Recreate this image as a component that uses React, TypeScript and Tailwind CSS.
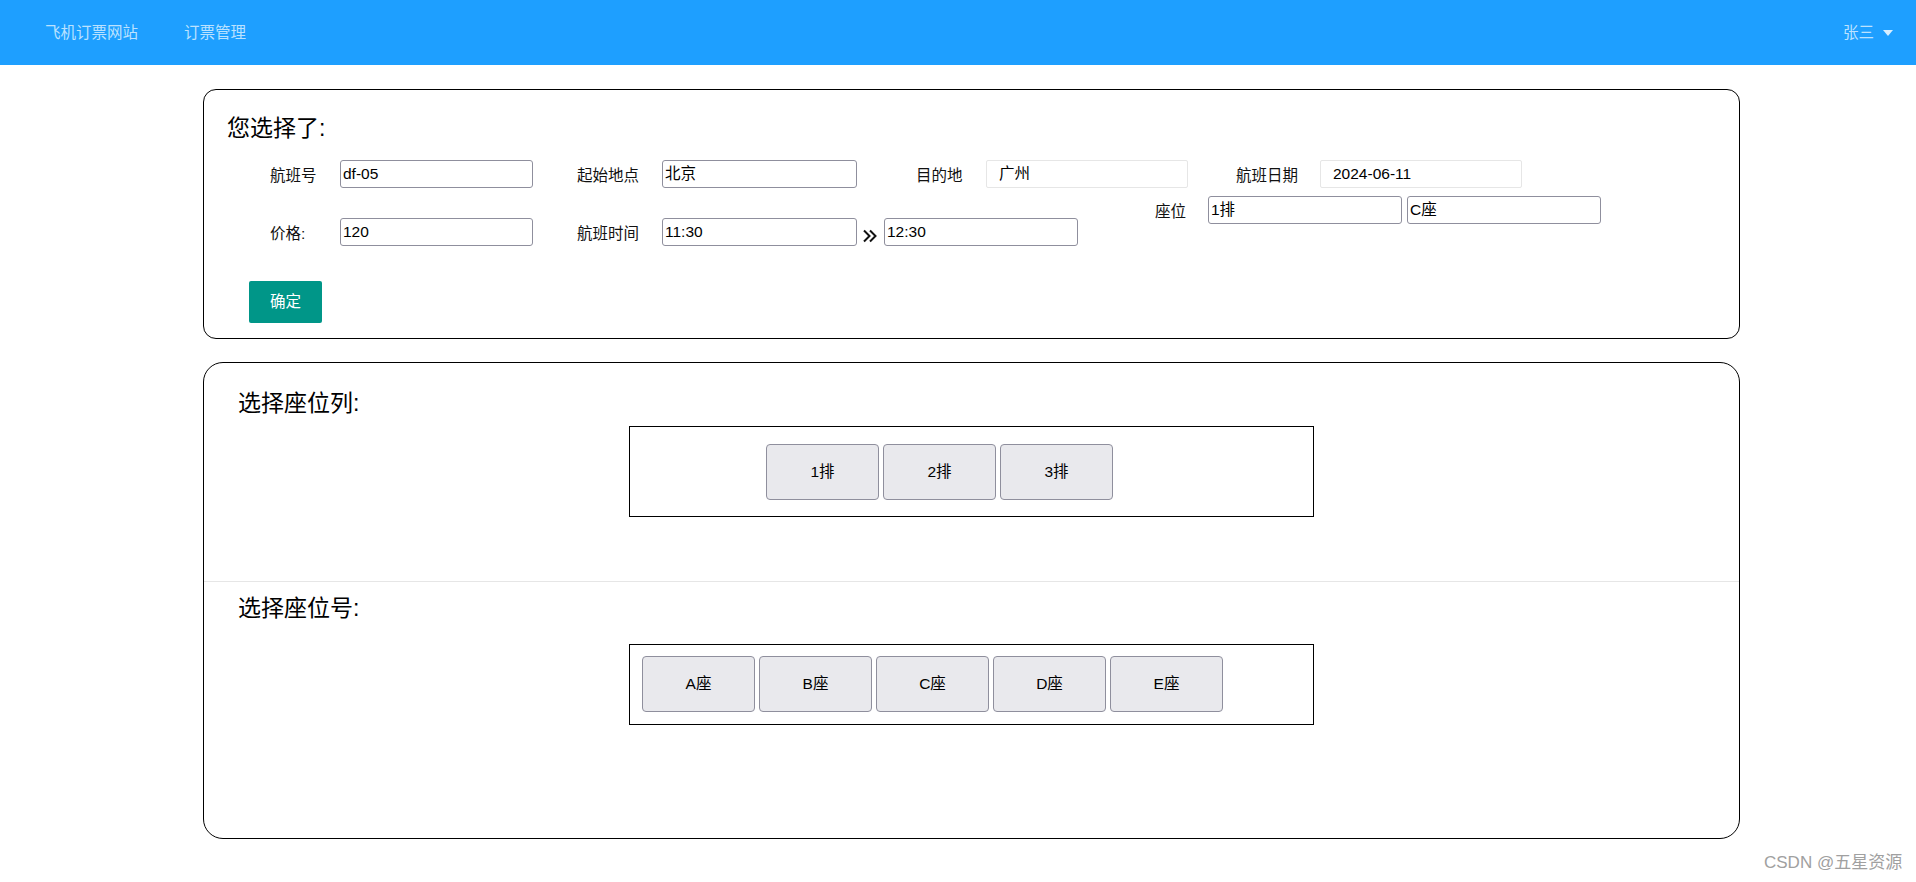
import React from "react";

const FONT = { fontFamily: '"Liberation Sans", "Noto Sans CJK SC", Arial, sans-serif' };

function Label({ w, children }: { w: string; children: React.ReactNode }) {
  return <div className={`${w} h-[28px] shrink-0 text-[15.5px] leading-[32px] text-[#111]`}>{children}</div>;
}

function NativeInput({ w, value }: { w: string; value: string }) {
  return (
    <div
      className={`${w} h-[28px] shrink-0 box-border border border-[#8f8f9d] rounded-[3px] bg-white pl-[2px] flex items-center text-[15.5px] text-black`}
    >
      {value}
    </div>
  );
}

function LayInput({ w, value }: { w: string; value: string }) {
  return (
    <div
      className={`${w} h-[28px] shrink-0 box-border border border-[#e6e6e6] rounded-[2px] bg-white pl-[12px] flex items-center text-[15.5px] text-black`}
    >
      {value}
    </div>
  );
}

function SeatButton({ children }: { children: React.ReactNode }) {
  return (
    <div className="w-[113px] h-[56px] shrink-0 box-border border border-[#8f8f9d] rounded-[4px] bg-[#e9e9ed] flex items-center justify-center text-[15.5px] text-black">
      {children}
    </div>
  );
}

export default function App() {
  return (
    <div className="relative w-[1916px] h-[882px] bg-white overflow-hidden" style={FONT}>
      {/* Navbar */}
      <div className="h-[65px] bg-[#1e9fff] flex items-center justify-between">
        <div className="flex items-center text-[15.5px] text-[#bbe2ff]">
          <span className="ml-[45px]">飞机订票网站</span>
          <span className="ml-[46px]">订票管理</span>
        </div>
        <div className="flex items-center mr-[23px] text-[15.5px] text-[#bbe2ff]">
          <span>张三</span>
          <span className="ml-[9px] w-0 h-0 border-l-[5.5px] border-r-[5.5px] border-t-[6px] border-l-transparent border-r-transparent border-t-[#d8eeff]" />
        </div>
      </div>

      {/* Card 1 */}
      <div className="ml-[203px] mt-[24px] w-[1537px] h-[250px] box-border border border-black rounded-[13px] pt-[23px]">
        <div className="pl-[23px] text-[23px] leading-[30px] text-black">您选择了:</div>

        {/* Row 1 */}
        <div className="mt-[17px] pl-[66px] flex items-start">
          <Label w="w-[70px]">航班号</Label>
          <NativeInput w="w-[193px]" value="df-05" />
          <div className="ml-[44px]">
            <Label w="w-[85px]">起始地点</Label>
          </div>
          <NativeInput w="w-[195px]" value="北京" />
          <div className="ml-[59px]">
            <Label w="w-[70px]">目的地</Label>
          </div>
          <LayInput w="w-[202px]" value="广州" />
          <div className="ml-[48px]">
            <Label w="w-[84px]">航班日期</Label>
          </div>
          <LayInput w="w-[202px]" value="2024-06-11" />
        </div>

        {/* Row 2 */}
        <div className="mt-[30px] pl-[66px] flex items-start">
          <div className="flex items-start">
            <Label w="w-[70px]">价格:</Label>
            <NativeInput w="w-[193px]" value="120" />
          </div>
          <div className="ml-[44px] flex items-start">
            <Label w="w-[85px]">航班时间</Label>
            <NativeInput w="w-[195px]" value="11:30" />
            <svg className="ml-[5px] mt-[10px]" width="16" height="16" viewBox="0 0 16 16" fill="none">
              <path d="M2 2.5 L7.5 8 L2 13.5" stroke="#111" strokeWidth="2" />
              <path d="M8 2.5 L13.5 8 L8 13.5" stroke="#111" strokeWidth="2" />
            </svg>
            <div className="ml-[6px]">
              <NativeInput w="w-[194px]" value="12:30" />
            </div>
          </div>
          <div className="ml-[77px] -mt-[22px] flex items-start">
            <div className="w-[53px] h-[28px] shrink-0 text-[15.5px] leading-[32px] text-[#111]">座位</div>
            <NativeInput w="w-[194px]" value="1排" />
            <div className="ml-[5px]">
              <NativeInput w="w-[194px]" value="C座" />
            </div>
          </div>
        </div>

        <div className="mt-[35px] ml-[45px] w-[73px] h-[42px] rounded-[2px] bg-[#009688] flex items-center justify-center text-[15.5px] text-white">
          确定
        </div>
      </div>

      {/* Card 2 */}
      <div className="ml-[203px] mt-[23px] w-[1537px] h-[477px] box-border border border-black rounded-[20px] pt-[25px]">
        <div className="pl-[34px] text-[23px] leading-[30px] text-black">选择座位列:</div>
        <div className="mt-[8px] ml-[425px] w-[685px] h-[91px] box-border border border-black pt-[17px] pl-[136px] flex gap-[4px]">
          <SeatButton>1排</SeatButton>
          <SeatButton>2排</SeatButton>
          <SeatButton>3排</SeatButton>
        </div>
        <div className="mt-[64px] h-px bg-[#e6e6e6]" />
        <div className="mt-[11px] pl-[34px] text-[23px] leading-[30px] text-black">选择座位号:</div>
        <div className="mt-[21px] ml-[425px] w-[685px] h-[81px] box-border border border-black pt-[11px] pl-[12px] flex gap-[4px]">
          <SeatButton>A座</SeatButton>
          <SeatButton>B座</SeatButton>
          <SeatButton>C座</SeatButton>
          <SeatButton>D座</SeatButton>
          <SeatButton>E座</SeatButton>
        </div>
      </div>

      {/* Watermark */}
      <div className="absolute left-[1764px] top-[852px] text-[17px] leading-[22px] text-[#a0a0a0] whitespace-nowrap">
        CSDN @五星资源
      </div>
    </div>
  );
}
